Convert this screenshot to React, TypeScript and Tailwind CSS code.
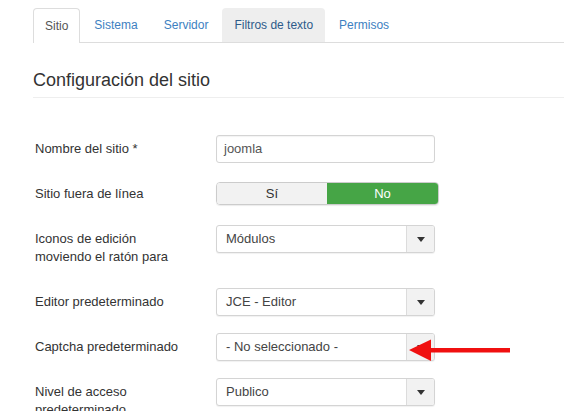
import React from 'react'

const tabs = [
  { label: 'Sitio', active: true },
  { label: 'Sistema' },
  { label: 'Servidor' },
  { label: 'Filtros de texto', hover: true },
  { label: 'Permisos' },
]

function Caret() {
  return (
    <svg width="8" height="5" viewBox="0 0 8 5" className="block">
      <path d="M0 0 L8 0 L4 5 Z" fill="#333" />
    </svg>
  )
}

function Select({ value }: { value: string }) {
  return (
    <div className="flex h-[28px] w-[219px] overflow-hidden rounded-[3px] border border-[#d4d4d4] bg-white shadow-[0_1px_1px_rgba(0,0,0,0.06)]">
      <div className="flex flex-1 items-center px-[9px] text-[13px] text-[#444]">
        {value}
      </div>
      <div className="flex w-[28px] items-center justify-center border-l border-[#dcdcdc] bg-[#f2f2f2]">
        <Caret />
      </div>
    </div>
  )
}

type RowProps = {
  label: React.ReactNode
  children: React.ReactNode
  tall?: boolean
}

function Row({ label, children, tall }: RowProps) {
  return (
    <div className={tall ? 'flex h-[63px] items-start' : 'flex h-[45px] items-start'}>
      <div className="w-[183px] pl-[2px] pt-[5px] text-[13px] leading-[18px] text-[#333]">
        {label}
      </div>
      <div>{children}</div>
    </div>
  )
}

export default function App() {
  return (
    <div
      className="relative h-[411px] w-[564px] overflow-hidden bg-white pl-[33px] pt-[8px]"
      style={{ fontFamily: '"Liberation Sans", Arial, sans-serif' }}
    >
      <ul className="flex border-b border-[#dddddd]">
        {tabs.map((t) => (
          <li
            key={t.label}
            className={
              t.active
                ? '-mb-px mr-[2px] rounded-t-[4px] border border-b-0 border-[#dddddd] bg-white px-[11px] py-[7px] text-[12px] leading-[20px] text-[#555]'
                : t.hover
                  ? 'mr-[2px] rounded-t-[4px] bg-[#eeeeee] px-[12px] py-[7px] text-[12px] leading-[20px] text-[#2d5b8a]'
                  : 'mr-[2px] px-[12px] py-[7px] text-[12px] leading-[20px] text-[#3d7fc1]'
            }
          >
            {t.label}
          </li>
        ))}
      </ul>

      <h2 className="mt-[25px] border-b border-[#eeeeee] pb-[5px] text-[18px] leading-[24px] font-normal text-[#333]">
        Configuración del sitio
      </h2>

      <div className="mt-[37px]">
        <Row label="Nombre del sitio *">
          <div className="flex h-[28px] w-[219px] items-center rounded-[3px] border border-[#d4d4d4] bg-white px-[7px] text-[13px] text-[#555] shadow-[inset_0_1px_1px_rgba(0,0,0,0.05)]">
            joomla
          </div>
        </Row>
        <Row label="Sitio fuera de línea">
          <div className="mt-[2px] flex h-[23px] w-[223px] overflow-hidden rounded-[4px] border border-[#cccccc] text-[13px] shadow-[0_1px_1px_rgba(0,0,0,0.08)]">
            <div className="flex w-[110px] items-center justify-center bg-[#f2f2f2] text-[#333]">
              Sí
            </div>
            <div className="flex flex-1 items-center justify-center bg-[#46a546] text-white">
              No
            </div>
          </div>
        </Row>
        <Row
          tall
          label={
            <>
              Iconos de edición
              <br />
              moviendo el ratón para
            </>
          }
        >
          <Select value="Módulos" />
        </Row>
        <Row label="Editor predeterminado">
          <Select value="JCE - Editor" />
        </Row>
        <Row label="Captcha predeterminado">
          <Select value="- No seleccionado -" />
        </Row>
        <Row
          tall
          label={
            <>
              Nivel de acceso
              <br />
              predeterminado
            </>
          }
        >
          <Select value="Publico" />
        </Row>
      </div>

      <svg
        className="absolute left-[405px] top-[336px]"
        width="110"
        height="30"
        viewBox="405 336 110 30"
      >
        <path d="M409 350 L431 339.5 L431 348 L510 348 L510 352.5 L431 352.5 L431 361 Z" fill="#f01010" />
      </svg>
    </div>
  )
}
